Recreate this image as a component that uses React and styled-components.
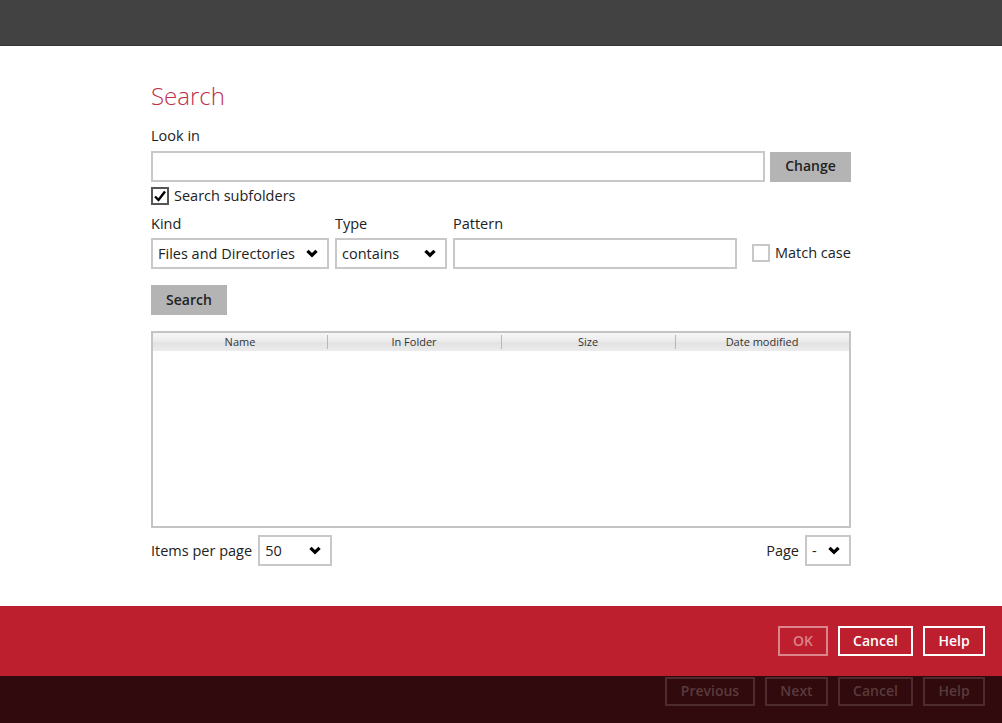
import React from "react";
import styled, { createGlobalStyle } from "styled-components";

const Global = createGlobalStyle`
  html, body { margin: 0; padding: 0; }
  body { font-family: "Open Sans", "Liberation Sans", sans-serif; color: #222; }
  * { box-sizing: border-box; }
`;

const Page = styled.div`
  width: 1002px;
  height: 723px;
  display: flex;
  flex-direction: column;
  overflow: hidden;
`;

const TopBar = styled.div`
  height: 46px;
  flex: none;
  background: #424242;
  border-bottom: 1px solid #363636;
`;

const Main = styled.div`
  flex: 1;
  background: #fff;
  padding: 34px 0 0 151px;
`;

const Content = styled.div`
  width: 700px;
  display: flex;
  flex-direction: column;
`;

const Title = styled.h1`
  margin: 0 0 14px;
  font-size: 24px;
  line-height: 32px;
  font-weight: 300;
  color: #c0304a;
`;

const Label = styled.div`
  font-size: 14.5px;
  line-height: 20px;
  color: #222;
`;

const Row = styled.div`
  display: flex;
  align-items: center;
  gap: ${(p) => p.$gap ?? 6}px;
  margin-top: ${(p) => p.$mt ?? 0}px;
`;

const FieldRow = styled(Row)`
  align-items: flex-end;
`;

const MatchCase = styled(Row)`
  margin-left: 9px;
  height: 32px;
`;

const TextInput = styled.div`
  height: 31px;
  width: ${(p) => p.$w}px;
  border: 2px solid #c8c8c8;
  background: #fff;
`;

const GreyButton = styled.button`
  height: ${(p) => p.$h ?? 30}px;
  width: ${(p) => p.$w}px;
  border: none;
  background: #b4b4b4;
  font-family: inherit;
  font-size: 14px;
  font-weight: 600;
  line-height: 28px;
  color: #222;
  padding: 0 0 1px;
`;

const CheckBox = styled.div`
  width: 18px;
  height: 18px;
  border: 2px solid ${(p) => (p.$checked ? "#555" : "#c8c8c8")};
  background: #fff;
  display: flex;
  align-items: center;
  justify-content: center;
`;

const CheckLabel = styled.span`
  font-size: 14.5px;
  line-height: 20px;
`;

const Field = styled.div`
  display: flex;
  flex-direction: column;
  gap: 4px;
  width: ${(p) => p.$w}px;
`;

const Select = styled.div`
  height: 31px;
  width: ${(p) => p.$w}px;
  border: 2px solid #c8c8c8;
  background: #fff;
  display: flex;
  align-items: center;
  justify-content: space-between;
  padding: 0 9px 0 5px;
  font-size: 14.5px;
`;

const Table = styled.div`
  margin-top: 16px;
  height: 197px;
  border: 2px solid #c4c4c4;
  background: #fff;
`;

const HeaderRow = styled.div`
  display: grid;
  grid-template-columns: repeat(4, 1fr);
  height: 18px;
  background: linear-gradient(#f6f6f6 0%, #ececec 45%, #e2e2e2 55%, #ececec 100%);
`;

const HeaderCell = styled.div`
  font-size: 11px;
  line-height: 17px;
  text-align: center;
  color: #333;
  position: relative;
  & + &::before {
    content: "";
    position: absolute;
    left: 0;
    top: 2px;
    bottom: 2px;
    border-left: 1px solid #b8b8b8;
  }
`;

const Footer = styled.div`
  margin-top: 7px;
  display: flex;
  align-items: center;
  justify-content: space-between;
`;

const RedBar = styled.div`
  height: 70px;
  flex: none;
  background: #bd1f2e;
  display: flex;
  justify-content: flex-end;
  align-items: center;
  gap: 10px;
  padding-right: 17px;
`;

const DarkBar = styled.div`
  height: 47px;
  flex: none;
  background: #300a0c;
  display: flex;
  justify-content: flex-end;
  align-items: flex-start;
  gap: 10px;
  padding: 1px 17px 0 0;
`;

const FrameButton = styled.button`
  width: ${(p) => p.$w}px;
  height: ${(p) => p.$h ?? 30}px;
  padding: 0 0 2px;
  background: transparent;
  border: 2px solid ${(p) => p.$border};
  color: ${(p) => p.$color};
  font-family: inherit;
  font-size: 14px;
  font-weight: 600;
`;

const Chevron = () => (
  <svg width="12" height="9" viewBox="0 0 12 9">
    <path d="M0.3 3 L2.6 0.7 L6 4 L9.4 0.7 L11.7 3 L6 8.4 Z" fill="#000" />
  </svg>
);

const Tick = () => (
  <svg width="14" height="14" viewBox="0 0 14 14">
    <path d="M2 7.5 L5.5 11 L12 2.5" fill="none" stroke="#000" strokeWidth="2.4" strokeLinejoin="miter" />
  </svg>
);

export default function App() {
  return (
    <Page>
      <Global />
      <TopBar />
      <Main>
        <Content>
          <Title>Search</Title>
          <Label>Look in</Label>
          <Row $mt={5} $gap={5}>
            <TextInput $w={614} />
            <GreyButton $w={81}>Change</GreyButton>
          </Row>
          <Row $mt={4} $gap={5}>
            <CheckBox $checked>
              <Tick />
            </CheckBox>
            <CheckLabel>Search subfolders</CheckLabel>
          </Row>
          <FieldRow $mt={8} $gap={6}>
            <Field $w={178}>
              <Label>Kind</Label>
              <Select $w={178}>
                Files and Directories <Chevron />
              </Select>
            </Field>
            <Field $w={112}>
              <Label>Type</Label>
              <Select $w={112}>
                contains <Chevron />
              </Select>
            </Field>
            <Field $w={284}>
              <Label>Pattern</Label>
              <TextInput $w={284} />
            </Field>
            <MatchCase $gap={5}>
              <CheckBox />
              <CheckLabel>Match case</CheckLabel>
            </MatchCase>
          </FieldRow>
          <Row $mt={16}>
            <GreyButton $w={76}>Search</GreyButton>
          </Row>
          <Table>
            <HeaderRow>
              <HeaderCell>Name</HeaderCell>
              <HeaderCell>In Folder</HeaderCell>
              <HeaderCell>Size</HeaderCell>
              <HeaderCell>Date modified</HeaderCell>
            </HeaderRow>
          </Table>
          <Footer>
            <Row $gap={6}>
              <CheckLabel>Items per page</CheckLabel>
              <Select $w={74}>
                50 <Chevron />
              </Select>
            </Row>
            <Row $gap={6}>
              <CheckLabel>Page</CheckLabel>
              <Select $w={46}>
                - <Chevron />
              </Select>
            </Row>
          </Footer>
        </Content>
      </Main>
      <RedBar>
        <FrameButton $w={50} $border="rgba(255,255,255,0.45)" $color="rgba(255,255,255,0.45)">OK</FrameButton>
        <FrameButton $w={75} $border="#fff" $color="#fff">Cancel</FrameButton>
        <FrameButton $w={62} $border="#fff" $color="#fff">Help</FrameButton>
      </RedBar>
      <DarkBar>
        <FrameButton $w={90} $h={29} $border="#4e2c2e" $color="#5a3a3c">Previous</FrameButton>
        <FrameButton $w={63} $h={29} $border="#4e2c2e" $color="#5a3a3c">Next</FrameButton>
        <FrameButton $w={75} $h={29} $border="#4e2c2e" $color="#5a3a3c">Cancel</FrameButton>
        <FrameButton $w={62} $h={29} $border="#4e2c2e" $color="#5a3a3c">Help</FrameButton>
      </DarkBar>
    </Page>
  );
}
